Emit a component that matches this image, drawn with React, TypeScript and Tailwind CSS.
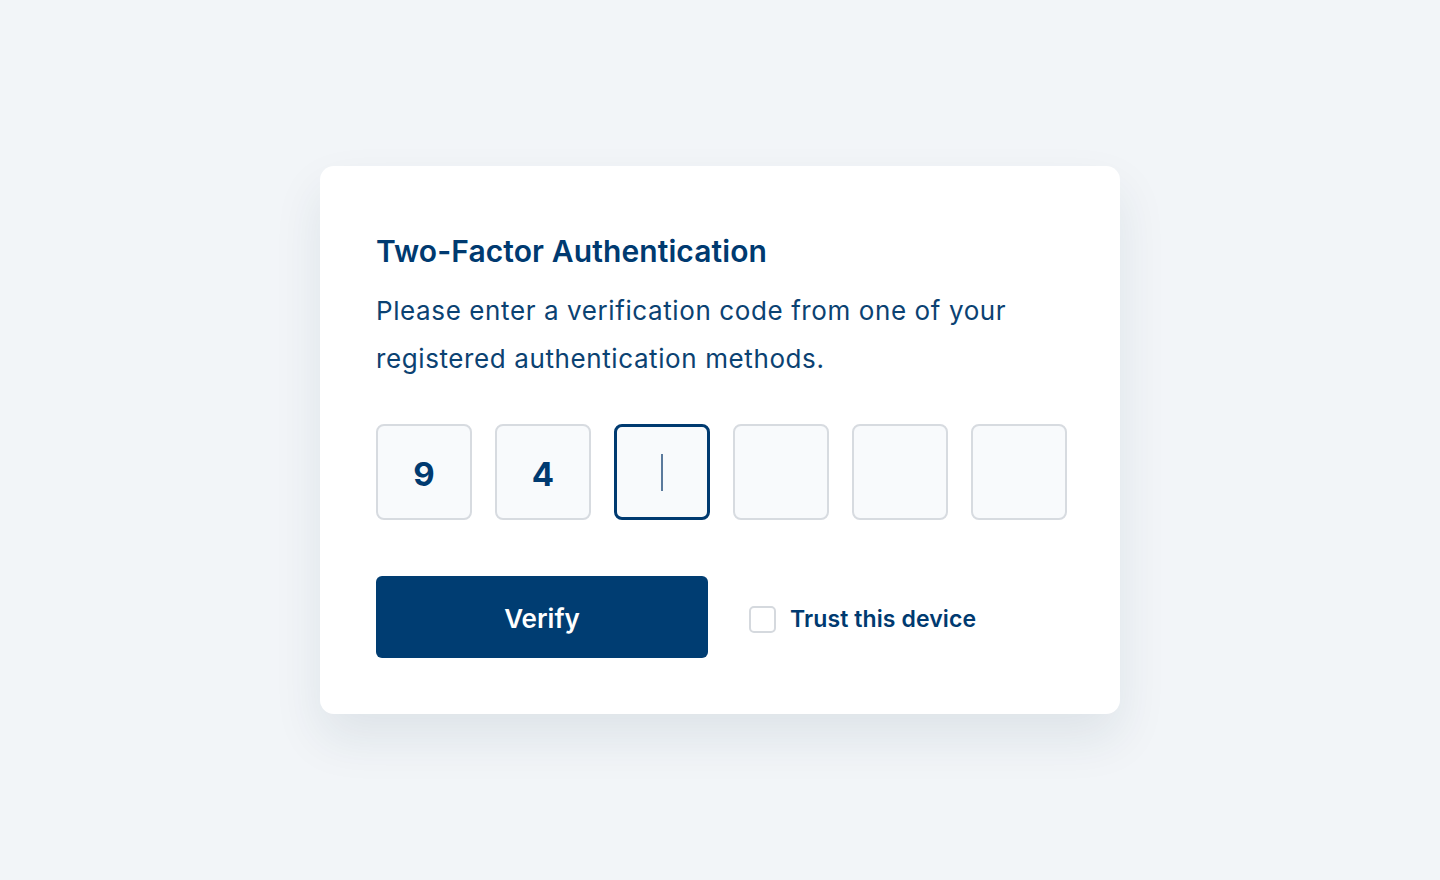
import React from "react";

export default function App() {
  const digits = ["9", "4", "", "", "", ""];
  return (
    <div
      className="w-full h-[880px] bg-[#f2f5f8] flex items-center justify-center"
      style={{ fontFamily: "Inter, 'Noto Sans', sans-serif" }}
    >
      <div className="w-[800px] h-[548px] bg-white rounded-[14px] shadow-[0_24px_50px_rgba(20,50,80,0.09)] px-[56px] pt-[67px] text-[#003a70]">
        <h1 className="text-[30px] leading-[36px] font-semibold tracking-[0.1px]">Two-Factor Authentication</h1>
        <p className="mt-[18px] text-[26px] leading-[48px] font-normal text-[#0b4272] tracking-[0.6px]">
          Please enter a verification code from one of your
          <br />
          registered authentication methods.
        </p>
        <div className="mt-[41px] flex gap-[23px]">
          {digits.map((d, i) => (
            <div
              key={i}
              className={
                i === 2
                  ? "shrink-0 w-[96px] h-[96px] rounded-[8px] border-[3px] border-[#003a70] bg-[#f8fafc] flex items-center justify-center"
                  : "shrink-0 w-[96px] h-[96px] rounded-[8px] border-2 border-[#d7dbe0] bg-[#f8fafc] flex items-center justify-center"
              }
            >
              {i === 2 ? (
                <div className="w-[2px] h-[37px] bg-[#5a7a9c]" />
              ) : (
                <span className="pt-[5px] text-[33px] font-bold text-[#003a70]">{d}</span>
              )}
            </div>
          ))}
        </div>
        <div className="mt-[56px] flex items-center">
          <button className="shrink-0 w-[332px] h-[82px] rounded-[6px] bg-[#003d72] text-white text-[26px] font-semibold pt-[2px]">
            Verify
          </button>
          <label className="ml-[41px] mt-[4px] flex items-center gap-[14px]">
            <span className="w-[27px] h-[27px] rounded-[5px] border-2 border-[#d5d9de] bg-white" />
            <span className="text-[23px] font-semibold text-[#003a70] tracking-[0.1px]">Trust this device</span>
          </label>
        </div>
      </div>
    </div>
  );
}
